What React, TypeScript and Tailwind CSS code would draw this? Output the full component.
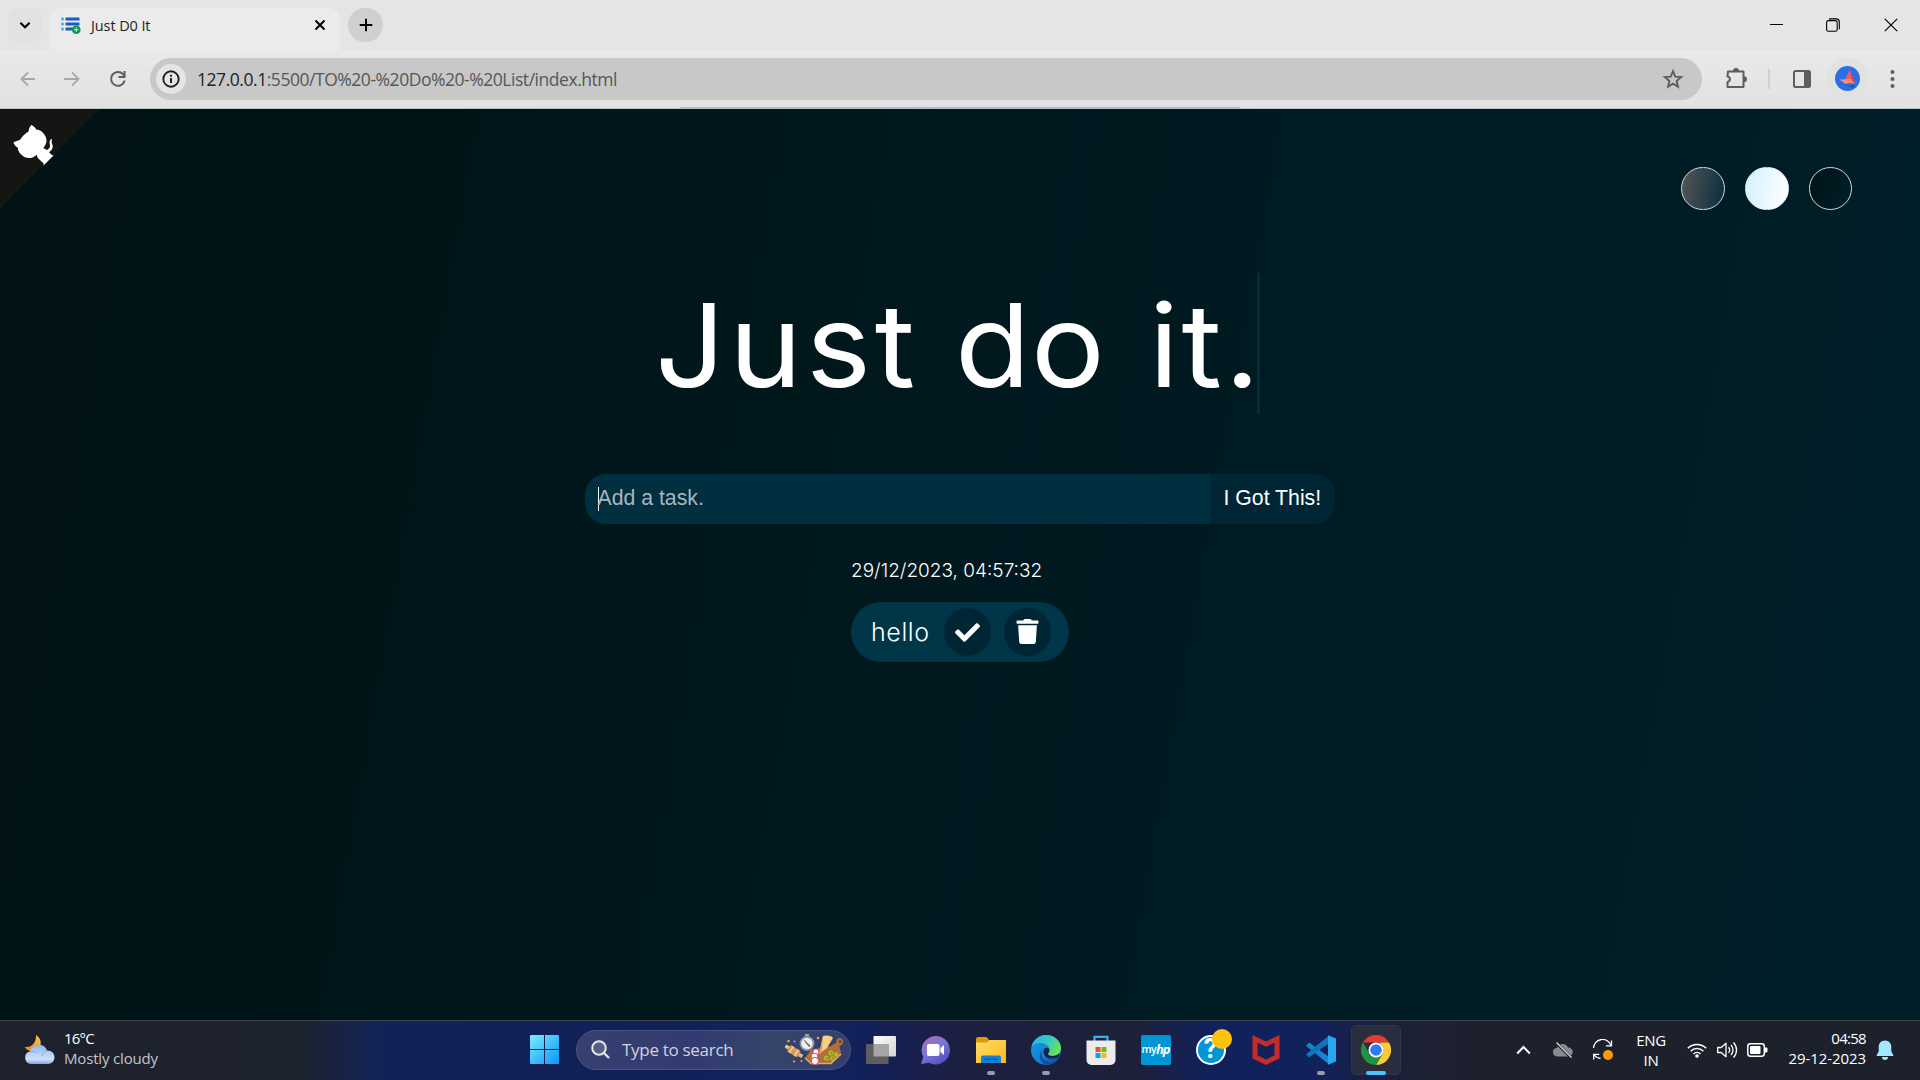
import React from "react";
import { FaCheck, FaTrash } from "react-icons/fa";

function Favicon() {
  return (
    <svg className="h-[19px] w-[20px] shrink-0" viewBox="0 0 20 19">
      <g fill="#55b1f2">
        <rect x="0" y="1.5" width="3" height="3" rx="1" />
        <rect x="0" y="6.5" width="3" height="3" rx="1" />
        <rect x="0" y="11.5" width="3" height="3" rx="1" />
      </g>
      <g fill="#1a5bc4">
        <rect x="4.5" y="1.5" width="14" height="3" rx=".6" />
        <rect x="4.5" y="6.5" width="14" height="3" rx=".6" />
        <rect x="4.5" y="11.5" width="9" height="3" rx=".6" />
      </g>
      <circle cx="15.3" cy="13.7" r="4.3" fill="#10954c" />
      <path d="M15.3 11.6v4.2M13.2 13.7h4.2" stroke="#b9f0cf" strokeWidth="1.3" />
    </svg>
  );
}

function TabStrip() {
  return (
    <div className="flex h-[50px] items-start bg-[#e5e5e5] pt-2">
      <div className="ml-2 flex h-[34px] w-[34px] items-center justify-center rounded-[10px] bg-[#e2e2e2]">
        <svg className="h-3 w-3" viewBox="0 0 12 12" fill="none" stroke="#000" strokeWidth="2.1">
          <path d="M1.4 3.7 6 8.3l4.600-4.600" />
        </svg>
      </div>
      <div className="ml-2 flex h-[42px] w-[290px] items-start rounded-t-[12px] bg-[#ebebeb] pl-[11px]">
        <div className="flex h-[34px] items-center">
          <Favicon />
          <span className="ml-[10px] w-[223px] whitespace-nowrap font-['Open_Sans'] text-[14.5px] leading-[35px] tracking-[-0.1px] text-[#1f1f1f]">
            Just D0 It
          </span>
          <svg className="h-[12px] w-[12px]" viewBox="0 0 12 12" stroke="#000" strokeWidth="2">
            <path d="M1.500 1.500l9 9M10.500 1.500l-9 9" />
          </svg>
        </div>
      </div>
      <div className="ml-2 flex h-[34px] w-[35px] items-center justify-center rounded-full bg-[#cfcfcf]">
        <svg className="h-[14px] w-[14px]" viewBox="0 0 14 14" stroke="#000" strokeWidth="2">
          <path d="M7 .7v12.600M.7 7h12.600" />
        </svg>
      </div>
      <div className="ml-auto flex h-[34px] items-center pr-[22px]">
        <svg className="h-[14px] w-[14px]" viewBox="0 0 14 14">
          <path d="M0 6h13v1H0z" fill="#000" />
        </svg>
        <svg className="ml-[42px] h-[14px] w-[14px]" viewBox="0 0 14 14" fill="none" stroke="#000" strokeWidth="1.1">
          <rect x=".6" y="2.600" width="10.600" height="10.600" rx="1.800" />
          <path d="M3 .9h7.300c1.700 0 3 1.300 3 3v7.400" />
        </svg>
        <svg className="ml-[44px] h-[14px] w-[14px]" viewBox="0 0 14 14" stroke="#000" strokeWidth="1.200">
          <path d="M.8.8l12.400 12.400M13.200.8.8 13.200" />
        </svg>
      </div>
    </div>
  );
}

function AddressBar() {
  return (
    <div className="flex h-[42px] w-[1552px] items-center rounded-full bg-[#c8c8c8] pl-[6px]">
      <div className="flex h-[30px] w-[30px] items-center justify-center rounded-full bg-[#e5e5e5]">
        <svg className="h-[18px] w-[18px]" viewBox="0 0 18 18" fill="none" stroke="#1f1f1f" strokeWidth="1.900">
          <circle cx="9" cy="9" r="7.700" />
          <path d="M9 8v5M9 4.800v2" />
        </svg>
      </div>
      <div className="ml-[11px] whitespace-nowrap font-['Open_Sans'] text-[17.5px] leading-[42px] tracking-[-0.46px] text-[#55575a]">
        <span className="text-[#1f1f1f]">127.0.0.1</span>:5500/TO%20-%20Do%20-%20List/index.html
      </div>
      <svg className="ml-auto mr-[18px] h-[22px] w-[22px]" viewBox="0 0 22 22" fill="none" stroke="#5b5e62" strokeWidth="1.900">
        <path d="M11 3.200l2.250 5.400 5.850.5-4.450 3.850 1.350 5.700L11 15.600l-5 3.050 1.350-5.700L2.900 9.100l5.850-.5z" />
      </svg>
    </div>
  );
}

function Toolbar() {
  return (
    <div className="flex h-[57px] items-center bg-gradient-to-b from-[#e9e9e9] to-[#e2e2e2] pl-5 pt-px">
      <svg className="h-4 w-4" viewBox="0 0 16 16" fill="none" stroke="#a8a8a8" strokeWidth="1.900">
        <path d="M15 8H1.600M8 1.300 1.500 8 8 14.700" />
      </svg>
      <svg className="ml-[28px] h-4 w-4" viewBox="0 0 16 16" fill="none" stroke="#a8a8a8" strokeWidth="1.900">
        <path d="M0 8h14M8 1.300 14.500 8 8 14.700" />
      </svg>
      <svg className="ml-[29px] h-[18px] w-[18px]" viewBox="0 0 18 18" fill="none" stroke="#5b5e62" strokeWidth="2">
        <path d="M15.700 10.500A6.900 6.900 0 1 1 13.900 4l1.900 2" />
        <path d="M15.500 1v6h-6" />
      </svg>
      <div className="ml-[23px]">
        <AddressBar />
      </div>
      <svg className="ml-[23px] h-[24px] w-[24px]" viewBox="0 0 24 24">
        <path
          d="M3 4.500h15.500v15.500H2.500v-5c3.200-.5 3.200-5 0-5.500z"
          fill="none"
          stroke="#5b5e62"
          strokeWidth="2"
          strokeLinejoin="round"
        />
        <path d="M8 4a3 3 0 0 1 6 0zM19 9.300a3 3 0 0 1 0 6z" fill="#5b5e62" />
      </svg>
      <div className="ml-[19px] h-5 w-[2px] bg-[#cfcfcf]" />
      <svg className="ml-[23px] h-[18px] w-[18px]" viewBox="0 0 18 18">
        <rect x="1" y="1" width="16" height="16" rx="1.500" fill="none" stroke="#5b5e62" strokeWidth="2" />
        <path d="M11 1h6v16h-6z" fill="#5b5e62" />
      </svg>
      <div className="ml-[15px] flex h-[42px] w-[42px] items-center justify-center rounded-full bg-[#e2e2e2]">
        <svg className="h-[26px] w-[26px]" viewBox="0 0 26 26">
          <circle cx="13.500" cy="12.500" r="12.500" fill="#2b6eea" />
          <path d="M6 16l11 4 4-2-2 4z" fill="#1c4fb4" />
          <path d="M16 3.500l3.500 11-8.500-1z" fill="#f4604f" />
          <path d="M5.500 13.500l12.500-.5 3.500 4.500-6-.5-4 1z" fill="#ff8a7a" />
          <path d="M16 3.500l5.500 14-4-3z" fill="#c94b56" />
        </svg>
      </div>
      <svg className="ml-[21px] h-[20px] w-[6px]" viewBox="0 0 6 20" fill="#5b5e62">
        <circle cx="3.500" cy="3" r="2" />
        <circle cx="3.500" cy="10" r="2" />
        <circle cx="3.500" cy="17" r="2" />
      </svg>
    </div>
  );
}

function GithubCorner() {
  return (
    <svg className="h-[100px] w-[100px] -scale-x-100 text-white" viewBox="0 0 250 250">
      <path d="M0 0l115 115h15l12 27 108 108V0z" fill="#151513" />
      <path
        fill="currentColor"
        d="M128.300 109C113.800 99.700 119 89.600 119 89.600c3-6.900 1.500-11 1.500-11-1.300-6.600 2.900-2.300 2.900-2.300 3.900 4.600 2.100 11 2.100 11-2.600 10.300 5.100 14.600 8.900 15.900"
      />
      <path
        fill="currentColor"
        d="M115 115c-.1.100 3.700 1.500 4.800.4l13.900-13.800c3.200-2.400 6.200-3.200 8.500-3-8.400-10.600-14.700-24.200 1.600-40.600 4.700-4.600 10.200-6.800 15.900-7 .6-1.600 3.500-7.400 11.700-10.900 0 0 4.700 2.400 7.400 16.100 4.300 2.400 8.400 5.600 12.100 9.200 3.600 3.600 6.800 7.800 9.200 12.200 13.700 2.600 16.200 7.300 16.200 7.300-3.600 8.200-9.400 11.100-10.900 11.700-.3 5.800-2.400 11.200-7.100 15.900-16.400 16.400-30 10-40.600 1.600.2 2.800-1 6.800-5 10.800L141 136.500c-1.200 1.200.6 5.400.8 5.300z"
      />
    </svg>
  );
}

function TodoPage() {
  return (
    <div className="flex h-[911px] flex-col bg-[linear-gradient(100deg,#001214,#001f29)] text-white">
      <div className="flex h-[164px] items-start justify-between">
        <GithubCorner />
        <div className="mr-[68px] mt-[58px] flex gap-5">
          <div className="h-[43px] w-[44px] rounded-full border border-[#d0dadd] bg-[linear-gradient(100deg,#575656,#062e3f)]" />
          <div className="h-[43px] w-[44px] rounded-full border border-[#e4f5fd] bg-[linear-gradient(100deg,#d4f1ff,#ffffff)]" />
          <div className="h-[43px] w-[43px] rounded-full border border-[#d0dadd] bg-[linear-gradient(100deg,#001214,#001f29)]" />
        </div>
      </div>

      <h1 className="ml-[655px] flex h-[141px] w-[605px] whitespace-nowrap border-r-[3px] border-[#002c3b] font-['Inter'] text-[115px] font-normal leading-[145px]">
        <span className="w-[300px] shrink-0 origin-left scale-x-[1.07] tracking-[3.7px]">Just </span>
        <span className="w-[194px] shrink-0 origin-left scale-x-[1.07] tracking-[0.5px]">do </span>
        <span className="w-[100px] shrink-0 origin-left scale-x-[1.07] tracking-[2.6px]">it.</span>
      </h1>

      <div className="mt-[60px] flex h-[50px] w-[750px] self-center overflow-hidden rounded-[21px] font-['Liberation_Sans'] text-[21.25px] leading-[49px]">
        <div className="flex w-[625px] bg-[#002f3f] pl-[12.500px] text-[#a6b7bd]">
          <div className="-mr-px mt-[13px] h-6 w-px bg-white" />
          Add a task.
        </div>
        <div className="w-[125px] whitespace-nowrap bg-[#002636] pl-[13.500px] text-white">I Got This!</div>
      </div>

      <div className="flex w-[218px] flex-col self-center">
        <p className="mt-[33px] whitespace-nowrap font-['Inter'] text-[19px] font-light leading-[28px]">
          29/12/2023, 04:57:32
        </p>
        <div className="mt-[17px] flex h-[60px] items-center rounded-full bg-[#003647]">
          <span className="ml-[20px] w-[73px] font-['Inter'] text-[25px] font-light leading-[60px] tracking-[0.600px]">
            hello
          </span>
          <div className="flex h-12 w-[47px] items-center justify-center rounded-full bg-[#002636]">
            <FaCheck className="h-[25px] w-[25px]" />
          </div>
          <div className="ml-[13px] flex h-12 w-[47px] items-center justify-center rounded-full bg-[#002636] pb-[2px]">
            <FaTrash className="h-[25px] w-[23px]" />
          </div>
        </div>
      </div>
    </div>
  );
}

function WeatherIcon() {
  return (
    <svg className="h-[30px] w-[31px]" viewBox="0 0 31 30">
      <defs>
        <linearGradient id="cloud" x1="0" y1="0" x2="0" y2="1">
          <stop offset="0" stopColor="#90b4f2" />
          <stop offset=".75" stopColor="#d3e0fb" />
          <stop offset="1" stopColor="#7fa4e8" />
        </linearGradient>
        <linearGradient id="moon" x1="1" y1="0" x2="0" y2="1">
          <stop offset="0" stopColor="#f7c948" />
          <stop offset="1" stopColor="#ee8216" />
        </linearGradient>
      </defs>
      <path d="M12 0c5 3 6 8.500 3 13-3 4-10 5-14.500-1C8 13 12.500 7 12 0z" fill="url(#moon)" />
      <path d="M7 29a6.500 6.500 0 0 1-.8-12.800C7.500 12 11 9.700 15 9.700c4.200 0 7 2.500 8 5.700 4.500-.3 7.500 3 7.500 6.800 0 4-3 6.800-6.800 6.800z" fill="url(#cloud)" />
      <path d="M6.200 16.500c3-.8 5.500.5 6.500 2M18 21c.5-3.500 2.500-5.300 5-5.500" fill="none" stroke="#7c9fe6" strokeWidth=".8" />
    </svg>
  );
}

function SearchArt() {
  return (
    <svg className="h-[32px] w-[61px]" viewBox="0 0 61 32">
      <path d="M46 12l5.500-3.500c-1.500-4 5-6 6.500-2 .8 3-1.500 5-3.500 5.500l1.500 8-9 9H26l-6-5 6-8z" fill="#b06f35" />
      <path d="M20 24l6 5.500h20l10-9.500" fill="none" stroke="#dca963" strokeWidth="1.600" />
      <circle cx="55" cy="7.500" r="1.200" fill="#343c6b" />
      <path d="M38 2c4-1 8-.5 10 2l-6 10-8 6z" fill="#f5cf86" />
      <path d="M38 2l-1 16-2.500 1.500z" fill="#e0a751" />
      <g transform="rotate(32 9 17)">
        <rect x="3" y="13.500" width="12" height="7.500" rx="1.500" fill="#d99a58" />
        <rect x="-1" y="15.500" width="4" height="3.500" fill="#f0c483" />
        <rect x="15" y="15.500" width="4" height="3.500" fill="#f0c483" />
        <path d="M6 13.500v7.500M12 13.500v7.500" stroke="#f4d3a3" strokeWidth="1.500" />
      </g>
      <circle cx="22" cy="9.500" r="7.500" fill="#8a91a5" />
      <circle cx="22" cy="9.500" r="5.700" fill="#eceef4" />
      <path d="M22 9.500l-2.500-3M22 9.500l3 3" stroke="#5d3a3a" strokeWidth="1.100" />
      <rect x="20" y="0" width="4" height="2" fill="#9aa2b5" />
      <g fill="#fff" stroke="#e0546c" strokeWidth="1.100">
        <circle cx="31" cy="18" r="3" />
        <circle cx="29.500" cy="22.500" r="3.300" />
        <circle cx="30" cy="27" r="3.500" />
      </g>
      <g fill="#a9b82d">
        <circle cx="46" cy="19" r="2.600" />
        <circle cx="41.500" cy="24" r="2.600" />
        <circle cx="47.500" cy="24.500" r="2.500" />
        <circle cx="51" cy="20.500" r="2.300" />
      </g>
      <g fill="#c04a2a">
        <circle cx="46.500" cy="19" r=".8" />
        <circle cx="42" cy="24" r=".8" />
        <circle cx="48" cy="24.500" r=".8" />
      </g>
      <g fill="#e4b35d">
        <circle cx="3.500" cy="7" r="1.200" />
        <circle cx="15" cy="22" r="1" />
        <circle cx="33" cy="4" r="1.200" />
        <circle cx="9" cy="27.500" r="1.100" />
      </g>
      <g fill="#a4a0d8">
        <circle cx="9.500" cy="7.500" r="1" />
        <circle cx="16.500" cy="27" r="1.100" />
      </g>
    </svg>
  );
}

function TaskSlot({ children, mark = "none" }: { children: React.ReactNode; mark?: "none" | "open" | "active" }) {
  const tile =
    mark === "active"
      ? "relative flex h-[50px] w-[50px] items-center justify-center rounded-[5px] border border-[#32354a] bg-[#2a2d3e]"
      : "relative flex h-[50px] w-[50px] items-center justify-center";
  return (
    <div className="flex w-[55px] justify-center">
      <div className={tile}>
        {children}
        {mark === "open" && <div className="absolute bottom-0 left-[21px] h-1 w-2 rounded-full bg-[#9a9cab]" />}
        {mark === "active" && <div className="absolute -bottom-px left-[14px] h-1 w-5 rounded-full bg-[#4cc2ff]" />}
      </div>
    </div>
  );
}

function TaskIcons() {
  return (
    <div className="ml-[2px] flex">
      <TaskSlot>
        <svg className="h-[28px] w-[30px]" viewBox="0 0 30 28">
          <defs>
            <linearGradient id="tv" x1="0" y1="0" x2="1" y2="1">
              <stop offset="0" stopColor="#fff" />
              <stop offset="1" stopColor="#d2d2d2" />
            </linearGradient>
          </defs>
          <rect x="7.500" y="0" width="22.500" height="20.500" rx="1" fill="url(#tv)" />
          <rect x="0" y="8" width="22.500" height="20" rx="1" fill="#5e5e60" />
          <path d="M7.500 8h15v12.500h-15z" fill="#a5a5a6" />
        </svg>
      </TaskSlot>
      <TaskSlot>
        <svg className="h-[30px] w-[30px]" viewBox="0 0 30 30">
          <defs>
            <linearGradient id="chat" x1="0" y1="0" x2=".7" y2="1">
              <stop offset="0" stopColor="#b06a98" />
              <stop offset=".5" stopColor="#7d78d8" />
              <stop offset="1" stopColor="#5052c0" />
            </linearGradient>
          </defs>
          <path d="M14.500 1a14.200 14.200 0 1 1-6.500 26.700L0 29l2.300-7A14.200 14.200 0 0 1 14.500 1z" fill="url(#chat)" />
          <rect x="6" y="9" width="12.500" height="12" rx="1.800" fill="#fff" />
          <path d="M19.500 13l3.500-3v10L19.500 17z" fill="#fff" />
        </svg>
      </TaskSlot>
      <TaskSlot mark="open">
        <svg className="h-[30px] w-[30px]" viewBox="0 0 30 30">
          <defs>
            <linearGradient id="folder" x1="0" y1="0" x2="1" y2="1">
              <stop offset="0" stopColor="#ffdd6b" />
              <stop offset="1" stopColor="#f9b916" />
            </linearGradient>
          </defs>
          <path d="M0 4.200C0 3 .8 2 2 2h7.500c1 0 1.500.5 2.200 1.200L13 5H30v6H0z" fill="#dd9a06" />
          <path d="M0 7.500h11l2.500-2.500H30v23H0z" fill="url(#folder)" />
          <path d="M5 28v-5.500C5 21.400 5.900 20.500 7 20.500h16c1.100 0 2 .9 2 2V28z" fill="#0f7fd8" />
          <path d="M8.500 24.300h13" stroke="#0a4d93" strokeWidth="1.200" />
        </svg>
      </TaskSlot>
      <TaskSlot mark="open">
        <svg className="h-[30px] w-[30px]" viewBox="0 0 30 30">
          <defs>
            <linearGradient id="edgeTop" x1="0" y1=".2" x2="1" y2=".6">
              <stop offset="0" stopColor="#2bb5e6" />
              <stop offset=".5" stopColor="#33c8c8" />
              <stop offset="1" stopColor="#6be651" />
            </linearGradient>
            <linearGradient id="edgeLeft" x1="0" y1="0" x2="1" y2="1">
              <stop offset="0" stopColor="#1a9be0" />
              <stop offset="1" stopColor="#0a6fd0" />
            </linearGradient>
          </defs>
          <circle cx="15" cy="15" r="15" fill="url(#edgeLeft)" />
          <path d="M11 15c-3 7 4 13 11 11 2.500-.8 4.500-2 5.500-3.500A15 15 0 0 1 15 30C9 28 6.500 19 11 15z" fill="#10509e" />
          <path d="M.5 12C2 5 8 0 15 0c8.500 0 15 6 15 13 0 5-4 8-8.500 8-3 0-4.500-1-4.500-2s1.500-1.500 1.500-4C18.500 11 14 8 9.500 8 5.500 8 2 9.500.5 12z" fill="url(#edgeTop)" />
          <path d="M18.500 15c0 2.500-1.500 3-1.500 4s1.500 2 4.500 2c3 0 5-1 6.700-2.500l.6 1.500-1.800 2.800C22 25 12 24 12.500 16c.5-4 5.500-4 6-1z" fill="#1b2140" />
          <path d="M13 18c1 4.500 6 6.500 14 4.500-4 5-13 4-14-4.500z" fill="#10509e" />
        </svg>
      </TaskSlot>
      <TaskSlot>
        <svg className="h-[30px] w-[30px]" viewBox="0 0 30 30">
          <path d="M8.500 6V1.800h13V6" fill="none" stroke="#2fb4ee" strokeWidth="2.200" />
          <path d="M.5 5.500h29V25a5 5 0 0 1-5 5h-19a5 5 0 0 1-5-5z" fill="#ececee" />
          <path d="M9.500 12h5v5h-5z" fill="#f25022" />
          <path d="M15.500 12h5v5h-5z" fill="#7fba00" />
          <path d="M9.500 18h5v5h-5z" fill="#00a4ef" />
          <path d="M15.500 18h5v5h-5z" fill="#ffb900" />
        </svg>
      </TaskSlot>
      <TaskSlot>
        <div className="flex h-[30px] w-[30px] items-center justify-center rounded-[2px] bg-[#0096d6] font-['Open_Sans'] leading-none text-white">
          <span className="text-[10.500px] font-semibold tracking-[-0.500px]">my</span>
          <span className="text-[13px] font-bold italic tracking-[-1px]">hp</span>
        </div>
      </TaskSlot>
      <TaskSlot>
        <div className="relative flex h-[30px] w-[30px] items-center justify-center rounded-full border-2 border-white bg-[#0096d6] font-['Roboto'] text-[27px] font-bold leading-none text-white">
          ?
          <div className="absolute -right-[8px] -top-[8px] h-5 w-5 rounded-full bg-[#ffc20e]" />
        </div>
      </TaskSlot>
      <TaskSlot>
        <svg className="h-[30px] w-[28px]" viewBox="0 0 28 30">
          <path d="M.5 0 14 6.500 27.500 0v23.500L14 30 .5 23.500z" fill="#c42b2b" />
          <path d="M5.500 7.500 14 11.700l8.500-4.200v12.800L14 24.500l-8.500-4.200z" fill="#14205a" />
        </svg>
      </TaskSlot>
      <TaskSlot mark="open">
        <svg className="h-[30px] w-[30px]" viewBox="0 0 30 30">
          <path d="M1 9.500 3.200 7.500 23 22v7.500L.6 11.300C.2 10.700.4 10 1 9.500z" fill="#1685cf" />
          <path d="M1 20.500 3.200 22.500 23 8V.5L.6 18.700c-.4.600-.2 1.300.4 1.800z" fill="#0f74ba" />
          <path d="M22 .2 30 3.500v23L22 29.800z" fill="#2aa5f0" />
        </svg>
      </TaskSlot>
      <TaskSlot mark="active">
        <svg className="h-[30px] w-[30px]" viewBox="0 0 48 48">
          <path d="M3.200 12A24 24 0 0 1 44.800 12H24z" fill="#e33b2e" />
          <path d="M44.800 12A24 24 0 0 1 24 48l10.400-18c2-3.500 2.200-12-5-18z" fill="#fcc934" />
          <path d="M3.200 12A24 24 0 0 0 24 48l10.400-18c-4 7-16.800 7-20.800 0z" fill="#229342" />
          <circle cx="24" cy="24" r="12" fill="#fff" />
          <circle cx="24" cy="24" r="9.300" fill="#2f7cf0" />
        </svg>
      </TaskSlot>
    </div>
  );
}

function Tray() {
  return (
    <div className="ml-auto flex items-center">
      <svg className="h-[10px] w-[15px]" viewBox="0 0 15 10" fill="none" stroke="#fff" strokeWidth="2">
        <path d="M1.200 8.500 7.500 2l6.300 6.500" />
      </svg>
      <svg className="ml-[22px] h-[18px] w-[20px]" viewBox="0 0 20 18">
        <path d="M4.500 15.500a4.400 4.400 0 0 1-.3-8.800A5.800 5.800 0 0 1 15 6.500a4.500 4.500 0 0 1 .5 9z" fill="#898b91" />
        <path d="M3 1.500 18.500 17" stroke="#1d212c" strokeWidth="3" />
        <path d="M3.500 1.500 18.500 16.500" stroke="#e2e3e6" strokeWidth="1.200" />
      </svg>
      <svg className="ml-[19px] h-[22px] w-[22px]" viewBox="0 0 22 22" fill="none" stroke="#fff" strokeWidth="1.300">
        <path d="M1.500 9A9 9 0 0 1 19 6.500M19.500 1.500v5.300h-5.500" />
        <path d="M8.500 19.500a9 9 0 0 1-6.500-4M1.700 20.500v-5.200h5.500" />
        <circle cx="16" cy="16" r="5" fill="#ff9a0a" stroke="none" />
      </svg>
      <div className="ml-[21px] w-[32px] text-center font-['Open_Sans'] text-[15px] leading-[20px] tracking-[-0.300px] text-white">
        <div>ENG</div>
        <div>IN</div>
      </div>
      <svg className="ml-[20px] h-[18px] w-[20px]" viewBox="0 0 20 18" fill="none" stroke="#fff" strokeWidth="1.500">
        <path d="M.8 7.300a13 13 0 0 1 18.400 0M3.700 10.200a8.900 8.900 0 0 1 12.600 0M6.500 13a5 5 0 0 1 7 0" />
        <circle cx="10" cy="15" r="1.800" fill="#fff" stroke="none" />
      </svg>
      <svg className="ml-[10px] h-[18px] w-[21px]" viewBox="0 0 21 18" fill="none" stroke="#fff" strokeWidth="1.300">
        <path d="M.7 6.500h3.500L9 2.300v13.400l-4.800-4.200H.7z" strokeLinejoin="round" />
        <path d="M11.500 6.300a4 4 0 0 1 0 5.400M14 4a7.300 7.300 0 0 1 0 10M16.500 1.500a10.800 10.800 0 0 1 0 15" />
      </svg>
      <svg className="ml-[9px] h-[16px] w-[21px]" viewBox="0 0 21 16">
        <rect x=".8" y="1.800" width="16.500" height="12.400" rx="2.600" fill="none" stroke="#fff" strokeWidth="1.500" />
        <rect x="3" y="4" width="10.500" height="8" rx="1" fill="#fff" />
        <path d="M18 5.500h1.300c.8 0 1.200.5 1.200 1.200v2.600c0 .7-.4 1.200-1.200 1.200H18z" fill="#fff" />
      </svg>
      <div className="ml-[17px] w-[81px] whitespace-nowrap pb-[3px] text-right font-['Open_Sans'] text-[15px] leading-[20px] text-white">
        <div className="tracking-[-0.700px]">04:58</div>
        <div className="tracking-[-0.080px]">29-12-2023</div>
      </div>
      <svg className="ml-[10px] mr-[26px] h-[20px] w-[18px]" viewBox="0 0 18 20" fill="#9fe8ff">
        <path d="M9 .5c3.800 0 6.300 2.800 6.300 6.300v4.700L17.300 15c.2.500 0 1-.6 1H1.300c-.6 0-.8-.5-.6-1l2-3.500V6.800C2.700 3.300 5.200.5 9 .5z" />
        <path d="M6 17h6a3 3 0 0 1-6 0z" />
      </svg>
    </div>
  );
}

function Taskbar() {
  return (
    <div className="flex h-[60px] items-center border-t border-[#40464f] pb-[2px] bg-[linear-gradient(90deg,#1e212c_0px,#1c222e_300px,#162348_350px,#112257_380px,#12215a_860px,#1c1f40_960px,#1d2038_1130px,#11215c_1210px,#11215a_1320px,#1c2036_1400px,#1d212c_1480px,#1d212c_1920px)]">
      <div className="flex w-[530px] items-center pl-[24px]">
        <WeatherIcon />
        <div className="ml-[9px] whitespace-nowrap pb-[3px] font-['Open_Sans'] text-[15px] leading-[20px]">
          <div className="tracking-[-0.800px] text-white">16°C</div>
          <div className="tracking-[-0.170px] text-[#c3c5ca]">Mostly cloudy</div>
        </div>
      </div>
      <svg className="h-[29px] w-[29px]" viewBox="0 0 29 29">
        <defs>
          <linearGradient id="win" x1="0" y1="0" x2="1" y2="1">
            <stop offset="0" stopColor="#7cecfc" />
            <stop offset="1" stopColor="#0a96f8" />
          </linearGradient>
        </defs>
        <path d="M0 1a1 1 0 0 1 1-1h13v14H0zM15 0h13a1 1 0 0 1 1 1v13H15zM0 15h14v14H1a1 1 0 0 1-1-1zM15 15h14v13a1 1 0 0 1-1 1H15z" fill="url(#win)" />
      </svg>
      <div className="ml-[17px] flex h-[40px] w-[275px] items-center rounded-full border border-[#4a5382] bg-[linear-gradient(90deg,#373f70,#323b70_45%,#34446a_70%,#363f6d)] pl-[14px]">
        <svg className="h-[19px] w-[19px]" viewBox="0 0 19 19" fill="none" stroke="#e4e6ee" strokeWidth="2">
          <circle cx="8" cy="8" r="6.800" fill="#566085" />
          <path d="M13 13l5 5" strokeWidth="2.400" />
        </svg>
        <span className="ml-[12px] w-[163px] whitespace-nowrap font-['Open_Sans'] text-[17px] leading-[38px] tracking-[-0.300px] text-[#cfd2de]">
          Type to search
        </span>
        <SearchArt />
      </div>
      <TaskIcons />
      <Tray />
    </div>
  );
}

export default function App() {
  return (
    <div className="flex h-[1080px] w-[1920px] flex-col overflow-hidden">
      <TabStrip />
      <Toolbar />
      <div className="flex h-px justify-center bg-[#e0e0e0]">
        <div className="h-px w-[560px] bg-[#b5b5b5]" />
      </div>
      <div className="h-px bg-[#bcc5c5]" />
      <TodoPage />
      <Taskbar />
    </div>
  );
}
